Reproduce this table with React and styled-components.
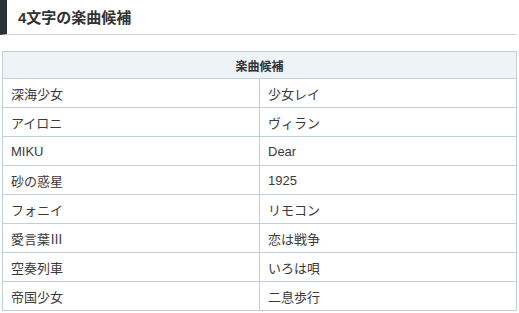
import styled, { createGlobalStyle } from "styled-components";

const GlobalStyle = createGlobalStyle`
  body {
    margin: 0;
    background: #fff;
    font-family: "Liberation Sans", "Noto Sans CJK JP", sans-serif;
    color: #333;
  }
`;

const Page = styled.div`
  width: 517px;
`;

const Heading = styled.h3`
  margin: 0;
  height: 35px;
  box-sizing: border-box;
  display: flex;
  align-items: center;
  padding: 0 0 2px 11px;
  border-left: 7px solid #2c3238;
  border-bottom: 1px solid #d3d3d3;
  font-size: 15px;
  font-weight: 700;
  color: #333;
`;

const Table = styled.table`
  margin: 16px 0 0 2px;
  width: 515px;
  border-collapse: collapse;
  table-layout: fixed;
  font-size: 13px;
`;

const HeadCell = styled.th`
  height: 26px;
  padding: 0;
  background: #eef3f5;
  border: 1px solid #bfd0d8;
  font-size: 12px;
  font-weight: 700;
  text-align: center;
  color: #333;
`;

const Cell = styled.td`
  height: 28px;
  padding: 0 8px;
  border: 1px solid #bfd0d8;
  color: #3a3a3a;
  text-align: left;
`;

const rows = [
  ["深海少女", "少女レイ"],
  ["アイロニ", "ヴィラン"],
  ["MIKU", "Dear"],
  ["砂の惑星", "1925"],
  ["フォニイ", "リモコン"],
  ["愛言葉Ⅲ", "恋は戦争"],
  ["空奏列車", "いろは唄"],
  ["帝国少女", "二息歩行"],
];

export default function App() {
  return (
    <>
      <GlobalStyle />
      <Page>
        <Heading>4文字の楽曲候補</Heading>
        <Table>
          <thead>
            <tr>
              <HeadCell colSpan={2}>楽曲候補</HeadCell>
            </tr>
          </thead>
          <tbody>
            {rows.map(([a, b]) => (
              <tr key={a}>
                <Cell>{a}</Cell>
                <Cell>{b}</Cell>
              </tr>
            ))}
          </tbody>
        </Table>
      </Page>
    </>
  );
}
